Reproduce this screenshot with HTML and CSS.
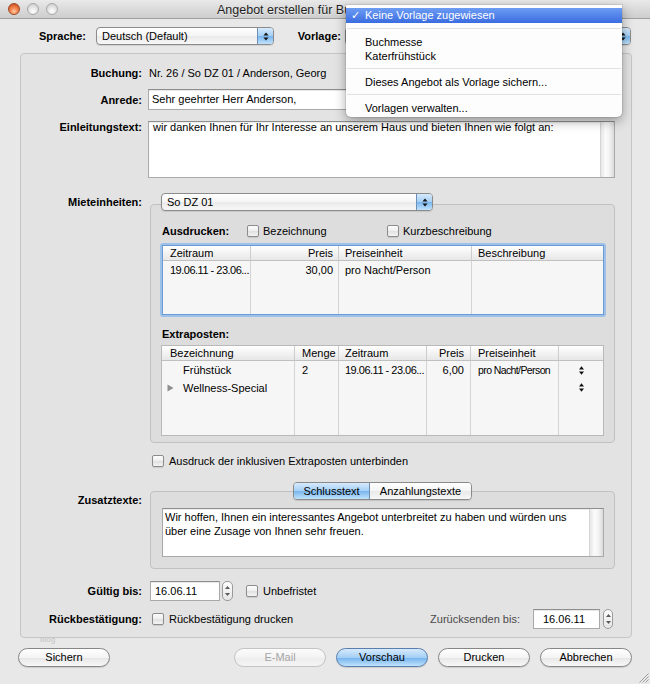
FILE: index.html
```html
<!DOCTYPE html>
<html lang="de">
<head>
<meta charset="utf-8">
<title>Angebot erstellen</title>
<link rel="stylesheet" href="styles.css">
</head>
<body>
<div class="window">
  <div class="titlebar">
    <div class="lights"><span class="light red"></span><span class="light"></span><span class="light"></span></div>
    <div class="title">Angebot erstellen für Buchung Nr. 26</div>
  </div>

  <div class="toprow">
    <span class="toplabel tl-sprache">Sprache:</span>
    <div class="popup pp-sprache"><span class="popup-text">Deutsch (Default)</span><span class="popup-arrow"><svg width="6" height="9" viewBox="0 0 6 9"><path d="M3 0.5L5.6 3.6H0.4Z M0.4 5.4H5.6L3 8.5Z" fill="#151515"/></svg></span></div>
    <span class="toplabel tl-vorlage">Vorlage:</span>
    <div class="popup pp-vorlage"><span class="popup-text">Keine Vorlage zugewiesen</span><span class="popup-arrow"><svg width="6" height="9" viewBox="0 0 6 9"><path d="M3 0.5L5.6 3.6H0.4Z M0.4 5.4H5.6L3 8.5Z" fill="#151515"/></svg></span></div>
  </div>

  <div class="mainbox">
    <div class="row r-buchung"><div class="label">Buchung:</div><div class="value">Nr. 26 / So DZ 01 / Anderson, Georg</div></div>

    <div class="row r-anrede"><div class="label">Anrede:</div><div class="field wide">Sehr geehrter Herr Anderson,</div></div>

    <div class="row top r-einl"><div class="label">Einleitungstext:</div>
      <div class="textarea ta-einl"><div class="ta-text">wir danken Ihnen für Ihr Interesse an unserem Haus und bieten Ihnen wie folgt an:</div><div class="ta-scroll"></div></div>
    </div>

    <div class="row top r-miet"><div class="label">Mieteinheiten:</div>
      <div class="section">
        <div class="popup pp-miet"><span class="popup-text">So DZ 01</span><span class="popup-arrow"><svg width="6" height="9" viewBox="0 0 6 9"><path d="M3 0.5L5.6 3.6H0.4Z M0.4 5.4H5.6L3 8.5Z" fill="#151515"/></svg></span></div>
        <div class="groupbox gb-miet">
          <div class="ausd-row">
            <span class="sublabel">Ausdrucken:</span>
            <span class="check-item ci-bez"><span class="cb"></span>Bezeichnung</span>
            <span class="check-item"><span class="cb"></span>Kurzbeschreibung</span>
          </div>
          <div class="focusring">
            <div class="grid t1">
              <div class="cell hd pad-l7">Zeitraum</div>
              <div class="cell hd num pad-r5">Preis</div>
              <div class="cell hd pad-l6">Preiseinheit</div>
              <div class="cell hd pad-l6">Beschreibung</div>
              <div class="cell pad-l7 date-txt">19.06.11 - 23.06...</div>
              <div class="cell num pad-r5">30,00</div>
              <div class="cell pad-l6">pro Nacht/Person</div>
              <div class="cell pad-l6"></div>
              <div class="cell"></div><div class="cell"></div><div class="cell"></div><div class="cell"></div>
            </div>
          </div>
          <div class="sublabel extra">Extraposten:</div>
          <div class="grid t2">
            <div class="cell hd pad-l8">Bezeichnung</div>
            <div class="cell hd pad-l7">Menge</div>
            <div class="cell hd pad-l6">Zeitraum</div>
            <div class="cell hd num pad-r6">Preis</div>
            <div class="cell hd pad-l7">Preiseinheit</div>
            <div class="cell hd"></div>

            <div class="cell pad-l21">Frühstück</div>
            <div class="cell pad-l7">2</div>
            <div class="cell pad-l6 date-txt">19.06.11 - 23.06...</div>
            <div class="cell num pad-r6">6,00</div>
            <div class="cell pad-l7 cond">pro Nacht/Person</div>
            <div class="cell icon-cell"><svg width="5" height="9" viewBox="0 0 5 9"><path d="M2.5 0.3L5 3.6H0Z M0 5.4H5L2.5 8.7Z" fill="#111"/></svg></div>

            <div class="cell tree-cell"><svg class="disclosure" width="7" height="8" viewBox="0 0 7 8"><path d="M0.5 0.5L6.5 4L0.5 7.5Z" fill="#8e8e8e"/></svg>Wellness-Special</div>
            <div class="cell"></div>
            <div class="cell"></div>
            <div class="cell"></div>
            <div class="cell"></div>
            <div class="cell icon-cell"><svg width="5" height="9" viewBox="0 0 5 9"><path d="M2.5 0.3L5 3.6H0Z M0 5.4H5L2.5 8.7Z" fill="#111"/></svg></div>

            <div class="cell"></div><div class="cell"></div><div class="cell"></div><div class="cell"></div><div class="cell"></div><div class="cell"></div>
          </div>
        </div>
      </div>
    </div>

    <div class="row r-ausdruck"><div class="label"></div><span class="check-item ci-main"><span class="cb"></span>Ausdruck der inklusiven Extraposten unterbinden</span></div>

    <div class="row top r-zusatz"><div class="label">Zusatztexte:</div>
      <div class="section">
        <div class="tabs"><span class="tab tab-sel">Schlusstext</span><span class="tab tab-anz">Anzahlungstexte</span></div>
        <div class="groupbox gb-zusatz">
          <div class="textarea ta-zusatz"><div class="ta-text">Wir hoffen, Ihnen ein interessantes Angebot unterbreitet zu haben und würden uns<br>über eine Zusage von Ihnen sehr freuen.</div><div class="ta-scroll"></div></div>
        </div>
      </div>
    </div>

    <div class="row r-gueltig"><div class="label">Gültig bis:</div>
      <div class="field date">16.06.11</div>
      <span class="stepper"><svg width="5" height="3" viewBox="0 0 5 3"><path d="M0 3L2.5 0L5 3Z" fill="#5a5a5a"/></svg><svg width="5" height="3" viewBox="0 0 5 3"><path d="M0 0H5L2.5 3Z" fill="#5a5a5a"/></svg></span>
      <span class="check-item ci-unbef"><span class="cb"></span>Unbefristet</span>
    </div>

    <div class="row r-rueck"><div class="label">Rückbestätigung:</div>
      <span class="check-item ci-main"><span class="cb"></span>Rückbestätigung drucken</span>
      <span class="dim-label">Zurücksenden bis:</span>
      <div class="field date date2">16.06.11</div>
      <span class="stepper stepper2"><svg width="5" height="3" viewBox="0 0 5 3"><path d="M0 3L2.5 0L5 3Z" fill="#5a5a5a"/></svg><svg width="5" height="3" viewBox="0 0 5 3"><path d="M0 0H5L2.5 3Z" fill="#5a5a5a"/></svg></span>
    </div>
  </div>

  <div class="buttons">
    <span class="btn">Sichern</span>
    <span class="btn btn-email">E-Mail</span>
    <span class="btn btn-primary">Vorschau</span>
    <span class="btn">Drucken</span>
    <span class="btn">Abbrechen</span>
  </div>

  <span class="watermark">blog</span>
  <svg class="grip" width="11" height="11" viewBox="0 0 11 11"><path d="M10.5 1.5L1.5 10.5M10.5 4.5L4.5 10.5M10.5 7.5L7.5 10.5" stroke="#a0a0a0" stroke-width="1"/></svg>

  <div class="menu">
    <div class="mi sel"><span class="check">✓</span>Keine Vorlage zugewiesen</div>
    <div class="msep"></div>
    <div class="mi">Buchmesse</div>
    <div class="mi">Katerfrühstück</div>
    <div class="msep"></div>
    <div class="mi">Dieses Angebot als Vorlage sichern...</div>
    <div class="msep"></div>
    <div class="mi">Vorlagen verwalten...</div>
  </div>
</div>
</body>
</html>
```

FILE: styles.css
```css
* { box-sizing: border-box; }
html, body { margin: 0; padding: 0; }
body {
  width: 650px; height: 684px; overflow: hidden;
  background: #e8e8e8;
  font-family: "Liberation Sans", Arial, sans-serif;
  font-size: 11px; color: #000;
}
.window {
  position: relative; width: 650px; height: 684px;
  background: #e8e8e8;
  display: flex; flex-direction: column;
}

/* title bar */
.titlebar {
  flex: none; height: 19px; display: flex; align-items: center;
  background: linear-gradient(#e9e9e9, #cdcdcd);
  border-bottom: 1px solid #a0a0a0;
}
.lights { flex: none; width: 217px; display: flex; gap: 7px; padding-left: 8px; }
.light {
  width: 12px; height: 12px; border-radius: 50%;
  border: 1px solid #a8a8a8;
  background: radial-gradient(circle at 50% 72%, #ffffff 0%, #e6e6e6 45%, #c4c4c4 100%);
}
.light.red {
  border-color: #9b4623;
  background: radial-gradient(circle at 50% 75%, #ffc9a0 0%, #f28048 45%, #bf4418 100%);
}
.title {
  font-size: 12.5px; color: #1e1e1e; white-space: nowrap; line-height: 18px;
  padding-top: 2px;
  text-shadow: 0 1px 0 rgba(255,255,255,.5);
}

/* popups */
.popup {
  flex: none; display: flex; height: 18px;
  border: 1px solid #8b8b8b; border-radius: 4px; overflow: hidden;
  background: linear-gradient(#ffffff, #f5f5f5 50%, #eaeaea 51%, #f7f7f7);
  box-shadow: 0 1px 1px rgba(0,0,0,.1);
}
.popup-text { flex: 1; padding-left: 5px; line-height: 16px; white-space: nowrap; overflow: hidden; }
.popup-arrow {
  flex: none; width: 16px; display: flex; align-items: center; justify-content: center;
  border-left: 1px solid #6c8fb9;
  background: linear-gradient(#d6eafc, #a4cff5 50%, #78b5ee 51%, #c0e2fb);
}
.popup-arrow svg { display: block; }

/* top row */
.toprow { flex: none; display: flex; align-items: center; height: 18px; margin-top: 8px; padding-right: 19px; }
.toplabel { flex: none; font-weight: bold; text-align: right; white-space: nowrap; }
.tl-sprache { width: 86px; margin-right: 10px; }
.pp-sprache { width: 178px; }
.tl-vorlage { width: 44px; margin-left: 23px; margin-right: 4px; }
.pp-vorlage { flex: 1; }

/* main box */
.mainbox {
  flex: none; margin: 8px 18px 0 20px;
  border: 1px solid #c6c6c6; border-radius: 4px;
  background: #e3e3e3;
  padding: 12px 16px 8px 0;
  display: flex; flex-direction: column;
}
.row { display: flex; align-items: center; }
.row.top { align-items: flex-start; }
.label { flex: none; width: 121px; margin-right: 6px; text-align: right; font-weight: bold; white-space: nowrap; }
.row.top .label { line-height: 12px; }
.value { white-space: nowrap; }

.r-buchung { height: 14px; }
.r-buchung .value { margin-left: 1px; }
.r-anrede { margin-top: 9px; height: 21px; }
.r-einl { margin-top: 11px; }
.r-miet { margin-top: 15px; }
.r-miet .label { margin-top: 3px; }
.r-ausdruck { margin-top: 12px; height: 12px; }
.r-zusatz { margin-top: 15px; }
.r-zusatz .label { margin-top: 12px; }
.r-gueltig { margin-top: 12px; height: 20px; }
.r-rueck { margin-top: 8px; height: 20px; }

/* fields */
.field {
  height: 21px; background: #fff;
  border: 1px solid #a9a9a9; border-top-color: #8e8e8e;
  box-shadow: inset 0 1px 1px rgba(0,0,0,.1);
  padding-left: 3px; line-height: 19px; white-space: nowrap;
}
.field.wide { flex: 1; }
.field.date { flex: none; width: 70px; height: 20px; line-height: 18px; margin-left: 2px; padding-left: 4px; }
.field.date2 { width: 67px; margin-left: 0; padding-left: 9px; }

.textarea {
  display: flex; background: #fff;
  border: 1px solid #a9a9a9; border-top-color: #8e8e8e;
  box-shadow: inset 0 1px 1px rgba(0,0,0,.08);
}
.ta-text { flex: 1; white-space: nowrap; overflow: hidden; }
.ta-scroll {
  flex: none; width: 14px; border-left: 1px solid #d4d4d4;
  background: linear-gradient(to right, #e6e6e6, #fbfbfb 35%, #f3f3f3 65%, #dadada);
}
.ta-einl { flex: 1; height: 57px; }
.ta-einl .ta-text { padding: 0 4px; line-height: 11px; }
.ta-zusatz { height: 49px; }
.ta-zusatz .ta-text { padding: 1px 2px; line-height: 14px; }

/* sections / group boxes */
.section { flex: 1; display: flex; flex-direction: column; margin-left: 2px; }
.groupbox { border: 1px solid #c1c1c1; border-radius: 4px; background: rgba(0,0,0,0.025); }
.pp-miet { width: 272px; margin-left: 11px; position: relative; z-index: 1; }
.gb-miet { margin-top: -7px; padding: 20px 8px 6px 9px; display: flex; flex-direction: column; }

.ausd-row { display: flex; align-items: center; height: 12px; }
.sublabel { flex: none; font-weight: bold; white-space: nowrap; }
.ausd-row .sublabel { width: 87px; padding-left: 2px; }
.ausd-row .check-item { gap: 4px; }
.ci-bez { width: 140px; }
.sublabel.extra { margin-top: 10px; height: 14px; line-height: 14px; margin-left: 2px; }

/* checkbox */
.check-item { flex: none; display: flex; align-items: center; gap: 5px; white-space: nowrap; }
.cb {
  flex: none; width: 12px; height: 12px;
  border: 1px solid #8c8c8c; border-radius: 2px;
  background: linear-gradient(#fdfdfd, #eeeeee 50%, #e0e0e0 51%, #f4f4f4);
  box-shadow: 0 1px 1px rgba(0,0,0,.1);
}
.ci-main { margin-left: 4px; }
.ci-unbef { margin-left: 13px; }

/* tables */
.focusring { margin-top: 6px; height: 74px; border: 2px solid #9ec1ea; border-radius: 3px; }
.grid { display: grid; background: #f6f6f6; }
.t1 {
  height: 100%;
  grid-template-columns: 88px 88px 133px 131px;
  grid-template-rows: 15px 19px 1fr;
  border: 1px solid #6b9ad5;
}
.t2 {
  margin: 4px 2px 0 1px; height: 91px;
  grid-template-columns: 133px 44px 88px 44px 88px 44px;
  grid-template-rows: 15px 18px 17px 1fr;
  border: 1px solid #b9b9b9;
}
.cell { border-right: 1px solid #d4d4d4; white-space: nowrap; overflow: hidden; }
.t1 .cell { line-height: 19px; }
.t2 .cell { line-height: 18px; }
.t1 .cell.hd, .t2 .cell.hd {
  line-height: 14px;
  background: linear-gradient(#ffffff, #f3f3f3 50%, #e7e7e7);
  border-bottom: 1px solid #c0c0c0; border-right-color: #cdcdcd;
}
.t1 .cell:nth-child(4n) { border-right: none; }
.t2 .cell:nth-child(6n) { border-right: none; }
.num { text-align: right; }
.pad-l6 { padding-left: 6px; }
.pad-l7 { padding-left: 7px; }
.pad-l8 { padding-left: 8px; }
.pad-l21 { padding-left: 21px; }
.pad-r5 { padding-right: 5px; }
.pad-r6 { padding-right: 6px; }
.date-txt { font-size: 11px; letter-spacing: -0.5px; }
.cond { font-size: 10.5px; letter-spacing: -0.6px; }
.icon-cell { display: flex; align-items: center; justify-content: center; }
.tree-cell { display: flex; align-items: center; padding-left: 5px; }
.disclosure { flex: none; margin-right: 9px; }

/* tabs */
.tabs {
  align-self: center; display: flex; height: 18px;
  border: 1px solid #8a8a8a; border-radius: 4px; overflow: hidden;
  position: relative; z-index: 1;
  box-shadow: 0 1px 1px rgba(0,0,0,.12);
}
.tab { line-height: 16px; text-align: center; white-space: nowrap;
  background: linear-gradient(#ffffff, #f5f5f5 50%, #e9e9e9 51%, #f7f7f7); }
.tab-sel { width: 76px; border-right: 1px solid #6f8cb2;
  background: linear-gradient(#d6eafc, #a4cff5 50%, #78b5ee 51%, #c0e2fb); }
.tab-anz { width: 101px; }
.gb-zusatz { margin-top: -9px; padding: 16px 10px 11px 11px; }

/* stepper */
.stepper {
  flex: none; width: 11px; height: 20px; margin-left: 2px;
  border: 1px solid #9a9a9a; border-radius: 5px;
  background: linear-gradient(#fdfdfd, #e6e6e6);
  display: flex; flex-direction: column; align-items: center; justify-content: space-between;
  padding: 4px 0;
}
.stepper svg { display: block; }
.stepper2 { width: 10px; margin-left: 3px; margin-right: 2px; }

.dim-label { margin-left: auto; margin-right: 13px; color: #4a4a4a; white-space: nowrap; }

/* buttons */
.buttons { flex: none; display: flex; gap: 10px; height: 19px; margin: 10px 18px 0 18px; }
.btn {
  flex: none; width: 92px; height: 19px;
  border: 1px solid #868686; border-radius: 10px;
  text-align: center; line-height: 17px; white-space: nowrap;
  background: linear-gradient(#ffffff, #f4f4f4 50%, #e6e6e6 51%, #f8f8f8);
  box-shadow: 0 1px 1px rgba(0,0,0,.12);
}
.btn-email {
  margin-left: auto; color: #a6a6a6; border-color: #c3c3c3;
  background: linear-gradient(#fbfbfb, #f3f3f3 50%, #ececec 51%, #f5f5f5);
  box-shadow: none;
}
.btn-primary {
  border-color: #5a7fae;
  background: linear-gradient(#d6eafc, #a4cff5 50%, #74b3ee 51%, #bfe2fb);
}

.watermark { position: absolute; left: 40px; top: 635px; font-size: 8px; color: #c4c4c4; }
.grip { position: absolute; right: 1px; bottom: 1px; }

/* menu */
.menu {
  position: absolute; left: 346px; top: 5px; width: 276px; height: 112px;
  padding: 3px 0 2px;
  background: #fdfdfd;
  border-radius: 0 0 5px 5px;
  box-shadow: 0 4px 12px rgba(0,0,0,.35), 0 0 0 1px rgba(0,0,0,.08);
  z-index: 10;
}
.mi { height: 14px; line-height: 14px; padding-left: 19px; white-space: nowrap; }
.mi.sel { height: 15px; line-height: 15px; color: #fff; background: linear-gradient(#6c9cf3, #3b6ce1); }
.check { display: inline-block; width: 14px; margin-left: -14px; }
.msep { height: 12px; padding-top: 5px; }
.msep::after { content: ""; display: block; height: 1px; background: #e2e2e2; margin: 0 1px; }
```
